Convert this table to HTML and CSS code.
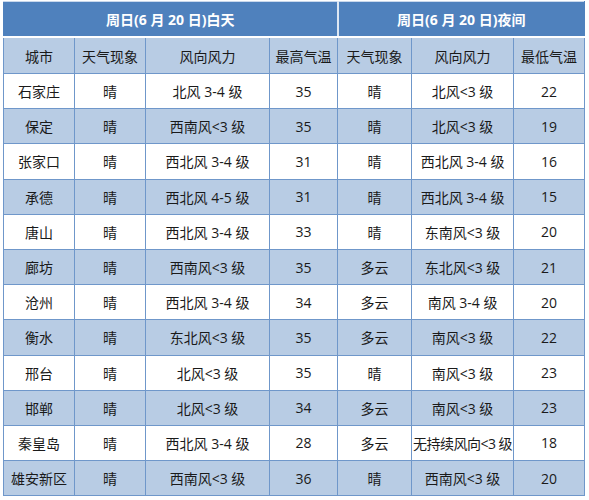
FILE: index.html
```html
<!DOCTYPE html>
<html lang="zh">
<head>
<meta charset="utf-8">
<link rel="stylesheet" href="styles.css">
</head>
<body>
<table class="weather">
  <colgroup>
    <col class="c1"><col class="c2"><col class="c3"><col class="c4"><col class="c5"><col class="c6"><col class="c7">
  </colgroup>
  <thead>
    <tr class="title">
      <th colspan="4">周日(6 月 20 日)白天</th>
      <th colspan="3">周日(6 月 20 日)夜间</th>
    </tr>
    <tr class="head">
      <th>城市</th><th>天气现象</th><th>风向风力</th><th>最高气温</th><th>天气现象</th><th>风向风力</th><th>最低气温</th>
    </tr>
  </thead>
  <tbody>
    <tr><td>石家庄</td><td>晴</td><td>北风 3-4 级</td><td>35</td><td>晴</td><td>北风&lt;3 级</td><td>22</td></tr>
    <tr><td>保定</td><td>晴</td><td>西南风&lt;3 级</td><td>35</td><td>晴</td><td>北风&lt;3 级</td><td>19</td></tr>
    <tr><td>张家口</td><td>晴</td><td>西北风 3-4 级</td><td>31</td><td>晴</td><td>西北风 3-4 级</td><td>16</td></tr>
    <tr><td>承德</td><td>晴</td><td>西北风 4-5 级</td><td>31</td><td>晴</td><td>西北风 3-4 级</td><td>15</td></tr>
    <tr><td>唐山</td><td>晴</td><td>西北风 3-4 级</td><td>33</td><td>晴</td><td>东南风&lt;3 级</td><td>20</td></tr>
    <tr><td>廊坊</td><td>晴</td><td>西南风&lt;3 级</td><td>35</td><td>多云</td><td>东北风&lt;3 级</td><td>21</td></tr>
    <tr><td>沧州</td><td>晴</td><td>西北风 3-4 级</td><td>34</td><td>多云</td><td>南风 3-4 级</td><td>20</td></tr>
    <tr><td>衡水</td><td>晴</td><td>东北风&lt;3 级</td><td>35</td><td>多云</td><td>南风&lt;3 级</td><td>22</td></tr>
    <tr><td>邢台</td><td>晴</td><td>北风&lt;3 级</td><td>35</td><td>晴</td><td>南风&lt;3 级</td><td>23</td></tr>
    <tr><td>邯郸</td><td>晴</td><td>北风&lt;3 级</td><td>34</td><td>多云</td><td>南风&lt;3 级</td><td>23</td></tr>
    <tr><td>秦皇岛</td><td>晴</td><td>西北风 3-4 级</td><td>28</td><td>多云</td><td class="tight">无持续风向&lt;3 级</td><td>18</td></tr>
    <tr><td>雄安新区</td><td>晴</td><td>西南风&lt;3 级</td><td>36</td><td>晴</td><td>西南风&lt;3 级</td><td>20</td></tr>
  </tbody>
</table>
</body>
</html>
```
FILE: styles.css
```css
html, body {
  margin: 0;
  padding: 0;
  background: #ffffff;
}
body {
  padding: 1px 0 0 3px;
  font-family: "Open Sans", "Noto Sans CJK SC", sans-serif;
  color: #1a1a1a;
}
.weather {
  border-collapse: collapse;
  table-layout: fixed;
  width: 582px;
  font-size: 14px;
}
.c1 { width: 71px; }
.c2 { width: 71px; }
.c3 { width: 124px; }
.c4 { width: 68px; }
.c5 { width: 74px; }
.c6 { width: 102px; }
.c7 { width: 71px; }

.weather th, .weather td {
  text-align: center;
  padding: 0;
  white-space: nowrap;
  border: 1px solid #6f97ca;
  font-weight: normal;
}
.title th {
  height: 34px;
  background: #4f81bd;
  color: #ffffff;
  font-weight: bold;
  border-color: #4f81bd;
  border-bottom: 2px solid #ffffff;
  border-top: 1px solid #c9d8ec;
}
.title th + th {
  border-left: 2px solid #dde7f3;
}
.head th {
  height: 35px;
  background: #b8cce4;
}
.weather td {
  height: 34.2px;
}
.weather tbody tr:nth-child(even) td {
  background: #b8cce4;
}
.tight {
  letter-spacing: -0.5px;
}
```
